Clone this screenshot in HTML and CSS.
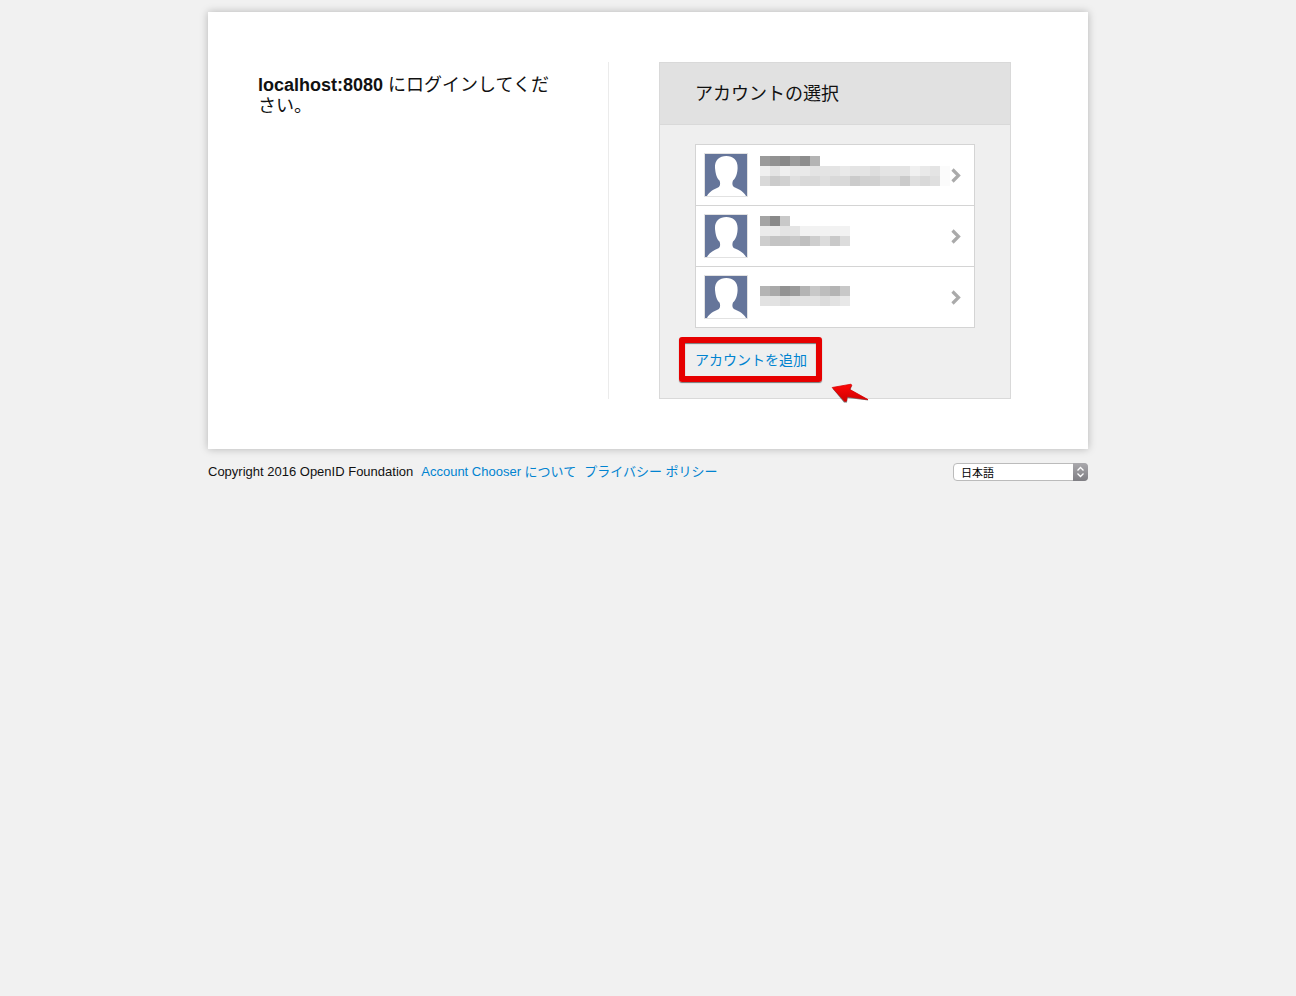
FILE: index.html
```html
<!DOCTYPE html>
<html lang="ja">
<head>
<meta charset="utf-8">
<meta name="viewport" content="width=device-width, initial-scale=1">
<title>アカウントの選択</title>
<link rel="stylesheet" href="styles.css">
</head>
<body>
<svg class="defs" aria-hidden="true">
  <symbol id="avatar" viewBox="0 0 44 44">
    <path fill="#e2e2e2" d="M0 0h44v44H0z"/>
    <path fill="#65759a" d="M1 1h42v42H1z"/>
    <path fill="#fff" d="M3 43C5 39 10 36 14 34.500C16.500 33.500 16.500 30 15.500 27.500C12.500 25 11.500 20 11 15C10.500 7 15.500 3 22.300 3C29 3 34 7 33.600 15C33.500 20 32 25 29 27.500C28 30 28 33.500 31 34.500C35 36 40 39 42 43z"/>
  </symbol>
  <symbol id="chevron" viewBox="0 0 10 16">
    <path fill="none" stroke="#aaa" stroke-width="3.200" d="M1.500 2.500L7.500 8.500L1.500 14.500"/>
  </symbol>
</svg>
<div class="page">
  <main class="card">
    <p class="intro"><strong>localhost:8080</strong> にログインしてください。</p>
    <section class="panel">
      <h1 class="panel-title">アカウントの選択</h1>
      <div class="panel-body">
        <ul class="accounts">
          <li><button class="account" type="button" aria-label="アカウント 1">
            <svg class="avatar"><use href="#avatar"/></svg>
            <svg class="masked" viewBox="0 0 19 3" width="190" height="30">
              <path fill="#9b9b9b" d="M0 0h1v1H0zM3 0h1v1H3z"/><path fill="#929292" d="M1 0h1v1H1z"/><path fill="#898989" d="M2 0h1v1H2z"/><path fill="#8d8d8d" d="M4 0h1v1H4z"/><path fill="#b4b4b4" d="M5 0h1v1H5z"/>
              <path fill="#e4e4e4" d="M0 1h18v1H0z"/><path fill="#f0f0f0" d="M0 1h1v1H0zM2 1h1v1H2zM15 1h1v1h-1z"/><path fill="#e9e9e9" d="M3 1h2v1H3zM8 1h1v1H8zM16 1h1v1h-1z"/><path fill="#dedede" d="M11 1h1v1h-1z"/>
              <path fill="#d9d9d9" d="M0 2h18v1H0z"/><path fill="#cbcbcb" d="M1 2h1v1H1zM9 2h1v1H9zM14 2h1v1h-1z"/><path fill="#d1d1d1" d="M2 2h1v1H2zM10 2h2v1h-2z"/><path fill="#dfdfdf" d="M3 2h1v1H3zM6 2h1v1H6zM15 2h1v1h-1zM17 2h1v1h-1z"/><path fill="#fbfbfb" d="M18 1h1v2h-1z"/>
            </svg>
            <svg class="chevron"><use href="#chevron"/></svg>
          </button></li>
          <li><button class="account" type="button" aria-label="アカウント 2">
            <svg class="avatar"><use href="#avatar"/></svg>
            <svg class="masked" viewBox="0 0 19 3" width="190" height="30">
              <path fill="#a4a4a4" d="M0 0h1v1H0z"/><path fill="#898989" d="M1 0h1v1H1z"/><path fill="#c9c9c9" d="M2 0h1v1H2z"/>
              <path fill="#ebebeb" d="M0 1h2v1H0z"/><path fill="#e4e4e4" d="M2 1h2v1H2z"/><path fill="#f2f2f2" d="M4 1h5v1H4z"/>
              <path fill="#cecece" d="M0 2h9v1H0z"/><path fill="#c4c4c4" d="M1 2h2v1H1z"/><path fill="#bfbfbf" d="M4 2h1v1H4z"/><path fill="#c9c9c9" d="M3 2h1v1H3zM7 2h1v1H7z"/><path fill="#dcdcdc" d="M6 2h1v1H6zM8 2h1v1H8z"/>
            </svg>
            <svg class="chevron"><use href="#chevron"/></svg>
          </button></li>
          <li><button class="account" type="button" aria-label="アカウント 3">
            <svg class="avatar"><use href="#avatar"/></svg>
            <svg class="masked single" viewBox="0 0 19 2" width="190" height="20">
              <path fill="#b4b4b4" d="M0 0h9v1H0z"/><path fill="#a9a9a9" d="M1 0h1v1H1z"/><path fill="#929292" d="M2 0h1v1H2z"/><path fill="#9b9b9b" d="M3 0h1v1H3z"/><path fill="#c8c8c8" d="M5 0h1v1H5zM8 0h1v1H8z"/><path fill="#bdbdbd" d="M6 0h1v1H6z"/>
              <path fill="#e2e2e2" d="M0 1h9v1H0z"/><path fill="#dcdcdc" d="M2 1h1v1H2zM6 1h1v1H6z"/><path fill="#e8e8e8" d="M8 1h1v1H8z"/>
            </svg>
            <svg class="chevron"><use href="#chevron"/></svg>
          </button></li>
        </ul>
        <a class="add" href="#add">アカウントを追加
          <svg class="arrow" viewBox="0 0 40 22" aria-hidden="true">
            <defs><linearGradient id="red" x2="0" y2="1"><stop stop-color="#ff0808"/><stop offset="1" stop-color="#cf0000"/></linearGradient></defs>
            <path fill="#777" d="M2.500 5.500L22 2.500L20.500 7L38.500 17.500L22 15.500L17.500 15L17 19.500L14 19.500z"/>
            <path fill="url(#red)" stroke="#d90000" stroke-width=".8" stroke-linejoin="round" d="M2.200 4.500L21 1.200L21.800 2.200L19.500 6.300L38 16.600L22 14.300L17.200 13.500L16.500 18L14.800 18.500z"/>
          </svg>
        </a>
      </div>
    </section>
  </main>
  <footer class="footer">
    <span>Copyright 2016 OpenID Foundation</span>
    <a href="#about">Account Chooser について</a>
    <a href="#privacy">プライバシー ポリシー</a>
    <div class="language">
      <select aria-label="言語"><option>日本語</option></select>
      <svg class="stepper" viewBox="0 0 15 18" aria-hidden="true">
        <defs><linearGradient id="grey" x2="0" y2="1"><stop stop-color="#aaa9ad"/><stop offset="1" stop-color="#7f7e83"/></linearGradient></defs>
        <path fill="url(#grey)" d="M0 0h11a4 4 0 0 1 4 4v10a4 4 0 0 1-4 4H0z"/>
        <path fill="none" stroke="#fff" stroke-width="1.300" d="M4.500 7.500l3-3 3 3M4.500 10.500l3 3 3-3"/>
      </svg>
    </div>
  </footer>
</div>
</body>
</html>
```
FILE: styles.css
```css
* {
  box-sizing: border-box;
}

body {
  margin: 0;
  background: #f1f1f1;
  color: #111;
  font: 13px/20px "Liberation Sans", Arial, "Noto Sans CJK JP", sans-serif;
}

a {
  color: #0083d0;
  text-decoration: none;
}

.defs {
  position: absolute;
  width: 0;
  height: 0;
}

.page {
  max-width: 880px;
  margin: 12px auto;
}

.card {
  display: grid;
  grid-template-columns: 351fr 352fr;
  column-gap: 50px;
  padding: 50px 77px 50px 50px;
  background: #fff;
  box-shadow: 0 0 8px rgba(0, 0, 0, 0.25);
}

.intro {
  margin: 0;
  padding: 13px 50px 0 0;
  border-right: 1px solid #ebebeb;
  font-size: 18px;
  line-height: 21px;
}

.panel {
  border: 1px solid #d9d9d9;
  background: #efefef;
}

.panel-title {
  margin: 0;
  padding: 17px 35px 15px;
  border-bottom: 1px solid #d9d9d9;
  background: #e1e1e1;
  font-size: 18px;
  font-weight: 400;
  line-height: 29px;
}

.panel-body {
  padding: 19px 35px 28px;
}

.accounts {
  margin: 0 0 22px;
  padding: 0;
  border: 1px solid #d4d4d4;
  background: #fff;
  list-style: none;
}

.accounts li + li {
  border-top: 1px solid #d4d4d4;
}

.account {
  display: flex;
  width: 100%;
  height: 60px;
  padding: 8px 13px 8px 8px;
  border: 0;
  background: none;
  cursor: pointer;
}

.avatar {
  flex: none;
  width: 44px;
  height: 44px;
}

.masked {
  flex: none;
  margin: 3px 0 0 12px;
  shape-rendering: crispEdges;
}

.accounts li:nth-child(2) .masked {
  margin-top: 2px;
}

.accounts .single {
  margin-top: 11px;
}

.chevron {
  flex: none;
  width: 10px;
  height: 16px;
  margin: 14px 0 0 auto;
}

.add {
  display: block;
  position: relative;
  width: max-content;
  font-size: 14px;
}

.add::after {
  content: "";
  position: absolute;
  inset: -13px -15px -12px -16px;
  border: 6px solid #e60000;
  border-radius: 3px;
  box-shadow: 0 1px 1px #777, inset 0 1px 1px #777;
}

.arrow {
  position: absolute;
  left: 135px;
  top: 33px;
  width: 40px;
  height: 22px;
}

.footer {
  display: flex;
  flex-wrap: wrap;
  gap: 4px 8px;
  margin-top: 13px;
}

.language {
  position: relative;
  width: 135px;
  height: 18px;
  margin: 1px 0 0 auto;
}

.language select {
  display: block;
  width: 100%;
  height: 18px;
  padding: 3px 20px 0 7px;
  border: 1px solid #bbb;
  border-radius: 4px;
  background: #fff;
  color: #000;
  appearance: none;
  font: 11px/13px "Liberation Sans", "Noto Sans CJK JP", sans-serif;
}

.stepper {
  position: absolute;
  top: 0;
  right: 0;
  width: 15px;
  height: 18px;
  pointer-events: none;
}

@media (max-width: 760px) {
  .card {
    grid-template-columns: 1fr;
    row-gap: 24px;
    padding: 20px;
  }

  .intro {
    padding-right: 0;
    border-right: 0;
  }
}
```
